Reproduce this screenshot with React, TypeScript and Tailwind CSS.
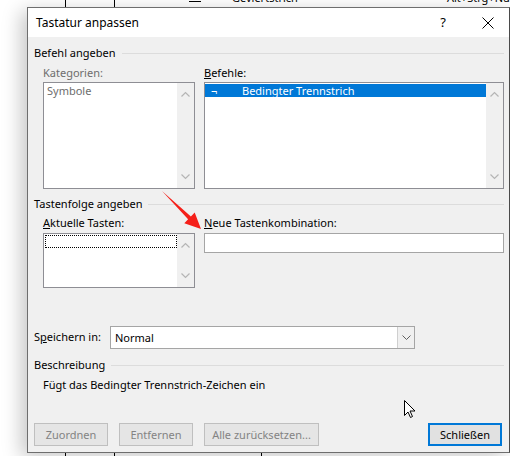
import React from 'react'

const font = { fontFamily: '"Noto Sans", "Segoe UI", sans-serif' }

function Chevron({ up }: { up?: boolean }) {
  return (
    <svg width="9" height="6" viewBox="0 0 9 6" className="block">
      <path
        d={up ? 'M0.5 5.5 L4.5 1.5 L8.5 5.5' : 'M0.5 0.5 L4.5 4.5 L8.5 0.5'}
        fill="none"
        stroke="#b5b5b5"
        strokeWidth="1.2"
      />
    </svg>
  )
}

function ScrollTrack() {
  return (
    <div className="flex w-[17px] shrink-0 flex-col items-center justify-between bg-[#f0f0f0] py-[8px]">
      <Chevron up />
      <Chevron />
    </div>
  )
}

function SectionHeader({ label }: { label: string }) {
  return (
    <div className="flex h-[14px] items-center gap-[6px] pl-[6px] pr-[5px]">
      <span className="leading-[14px] text-black">{label}</span>
      <div className="h-px flex-1 bg-[#dcdcdc]" />
    </div>
  )
}

function Btn({ label, primary, wide }: { label: string; primary?: boolean; wide?: boolean }) {
  return (
    <div
      className={`flex h-[23px] items-center justify-center leading-none ${wide ? 'w-[115px]' : 'w-[74px]'} ${
        primary
          ? 'border-2 border-[#0078d7] bg-[#e1e1e1] text-black'
          : 'border border-[#bfbfbf] bg-[#e5e5e5] text-[#838383]'
      }`}
    >
      {label}
    </div>
  )
}

export default function App() {
  return (
    <div className="relative h-[456px] w-[510px] overflow-hidden bg-white text-[11px]" style={font}>
      {/* Word table behind the dialog */}
      <div className="absolute left-[65px] top-0 h-[8px] w-px bg-black" />
      <div className="absolute left-[114px] top-0 h-[8px] w-px bg-black" />
      <div className="absolute left-[65px] top-[452px] h-[8px] w-px bg-black" />
      <div className="absolute left-[114px] top-[452px] h-[8px] w-px bg-black" />
      <div className="absolute left-[261px] top-[452px] h-[8px] w-px bg-black" />
      <div className="absolute left-[189px] top-[1px] h-px w-[12px] bg-black" />
      <span className="absolute left-[232px] top-[-8px] leading-none">Geviertstrich</span>
      <span className="absolute left-[447px] top-[-8px] leading-none">Alt+Strg+Num -</span>

      {/* dialog */}
      <div className="absolute left-[27px] top-[7px] flex h-[446px] w-[483px] flex-col border border-[#6e6e6e] border-r-[#4a4a4a] bg-[#f0f0f0] shadow-[-6px_4px_18px_rgba(0,0,0,0.22)]">
        <div className="flex h-[29px] shrink-0 items-center bg-white pl-[8px] pr-[15px]">
          <span className="flex-1 text-[12px] text-black">Tastatur anpassen</span>
          <span className="mr-[36px] text-[13px] text-black">?</span>
          <svg width="12" height="12" viewBox="0 0 12 12">
            <path d="M0.5 0.5 L11.5 11.5 M11.5 0.5 L0.5 11.5" stroke="#000" strokeWidth="1" />
          </svg>
        </div>

        <div className="mt-[9px]">
          <SectionHeader label="Befehl angeben" />
        </div>

        <div className="mt-[6px] flex gap-[9px] pl-[15px] pr-[5px]">
          <div className="flex w-[152px] flex-col">
            <span className="h-[14px] leading-[14px] text-[#6d6d6d]">Kategorien:</span>
            <div className="mt-[2px] flex h-[107px] border border-[#8e8e94] bg-white">
              <div className="flex-1 pl-[3px] pt-px leading-[14px] text-[#6d6d6d]">Symbole</div>
              <ScrollTrack />
            </div>
          </div>
          <div className="flex flex-1 flex-col">
            <span className="h-[14px] leading-[14px]">
              <span className="underline">B</span>efehle:
            </span>
            <div className="mt-[2px] flex h-[107px] border border-[#8e8e94] bg-white">
              <div className="flex-1 pt-px">
                <div className="flex h-[13px] items-center bg-[#0078d7] leading-none text-white">
                  <span className="w-[37px] pl-[6px]">¬</span>
                  <span>Bedingter Trennstrich</span>
                </div>
              </div>
              <ScrollTrack />
            </div>
          </div>
        </div>

        <div className="mt-[8px]">
          <SectionHeader label="Tastenfolge angeben" />
        </div>

        <div className="mt-[5px] flex gap-[9px] pl-[15px] pr-[5px]">
          <div className="flex w-[152px] flex-col">
            <span className="h-[14px] leading-[14px]">
              <span className="underline">A</span>ktuelle Tasten:
            </span>
            <div className="mt-[3px] flex h-[55px] border border-[#8e8e94] bg-white">
              <div className="flex-1 pl-px pt-px">
                <div className="h-[13px] border border-dotted border-black" />
              </div>
              <ScrollTrack />
            </div>
          </div>
          <div className="flex flex-1 flex-col">
            <span className="h-[14px] leading-[14px]">
              <span className="underline">N</span>eue Tastenkombination:
            </span>
            <div className="mt-[3px] h-[20px] border border-[#a5a5a5] bg-white" />
          </div>
        </div>

        <div className="mt-[38px] flex items-center pl-[6px] pr-[94px]">
          <span className="w-[76px]">
            S<span className="underline">p</span>eichern in:
          </span>
          <div className="flex h-[23px] flex-1 border border-[#a5a5a5] bg-white">
            <span className="flex-1 pl-[4px] leading-[21px]">Normal</span>
            <div className="flex w-[17px] items-center justify-center border-l border-[#cfcfcf] bg-[#f0f0f0]">
              <svg width="9" height="6" viewBox="0 0 9 6">
                <path d="M0.5 0.5 L4.5 4.5 L8.5 0.5" fill="none" stroke="#606060" strokeWidth="1" />
              </svg>
            </div>
          </div>
        </div>

        <div className="mt-[9px]">
          <SectionHeader label="Beschreibung" />
        </div>
        <div className="mt-[6px] h-[14px] pl-[15px] leading-[14px]">Fügt das Bedingter Trennstrich-Zeichen ein</div>

        <div className="mt-[31px] flex items-center pl-[6px] pr-[7px]">
          <div className="flex gap-[11px]">
            <Btn label="Zuordnen" />
            <Btn label="Entfernen" />
            <Btn label="Alle zurücksetzen..." wide />
          </div>
          <div className="flex-1" />
          <Btn label="Schließen" primary />
        </div>
      </div>

      {/* red annotation arrow */}
      <svg className="absolute left-[158px] top-[188px]" width="48" height="46" viewBox="0 0 48 46">
        <path d="M4 3 L32.9 28.4 L36.7 24.4 L43 41 L26.3 35.2 L30.1 31.2 Z" fill="#f5201a" />
      </svg>

      {/* mouse cursor */}
      <svg className="absolute left-[404px] top-[400px]" width="12" height="19" viewBox="0 0 12 19">
        <path d="M0.5 0.5 L0.5 15.5 L4 12 L6.5 17.5 L8.5 16.5 L6 11 L11 11 Z" fill="#fff" stroke="#000" strokeWidth="1" />
      </svg>
    </div>
  )
}
